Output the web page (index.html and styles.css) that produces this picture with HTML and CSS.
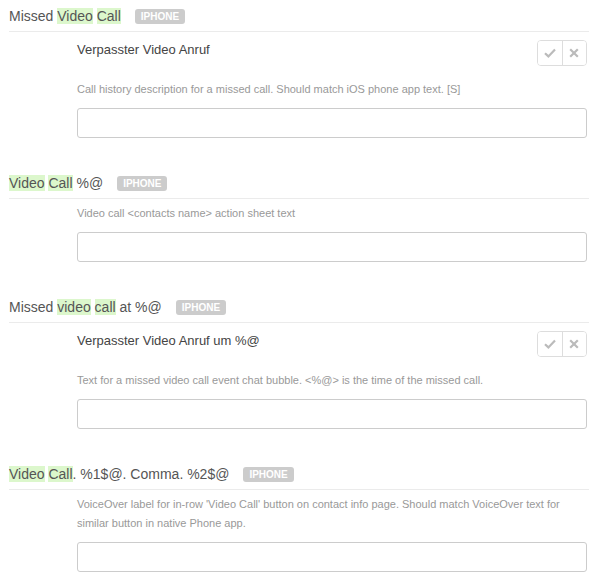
FILE: index.html
```html
<!DOCTYPE html>
<html lang="en">

<head>
    <meta charset="UTF-8">
    <meta name="viewport" content="width=device-width, initial-scale=1.0">
    <title>Translations</title>
    <link rel="stylesheet" href="styles.css">
</head>

<body>
    <div class="list">

        <div class="entry">
            <div class="entry-head">
                <span class="source">Missed <mark>Video</mark> <mark>Call</mark></span>
                <span class="badge">iPhone</span>
            </div>
            <div class="entry-body">
                <div class="suggestion">
                    <span class="suggestion-text">Verpasster Video Anruf</span>
                    <div class="actions">
                        <button class="act" title="Accept">
                            <svg width="12" height="10" viewBox="0 0 12 10"><path d="M1 5.2 L4.4 8.4 L11 1.6" fill="none" stroke="#bbb" stroke-width="2.2"/></svg>
                        </button>
                        <button class="act" title="Reject">
                            <svg width="10" height="10" viewBox="0 0 10 10"><path d="M1.2 1.2 L8.8 8.8 M8.8 1.2 L1.2 8.8" fill="none" stroke="#bbb" stroke-width="2.2"/></svg>
                        </button>
                    </div>
                </div>
                <p class="desc">Call history description for a missed call. Should match iOS phone app text. [S]</p>
                <input type="text" class="field">
            </div>
        </div>

        <div class="entry">
            <div class="entry-head">
                <span class="source"><mark>Video</mark> <mark>Call</mark> %@</span>
                <span class="badge">iPhone</span>
            </div>
            <div class="entry-body">
                <p class="desc first">Video call &lt;contacts name&gt; action sheet text</p>
                <input type="text" class="field">
            </div>
        </div>

        <div class="entry">
            <div class="entry-head">
                <span class="source">Missed <mark>video</mark> <mark>call</mark> at %@</span>
                <span class="badge">iPhone</span>
            </div>
            <div class="entry-body">
                <div class="suggestion">
                    <span class="suggestion-text">Verpasster Video Anruf um %@</span>
                    <div class="actions">
                        <button class="act" title="Accept">
                            <svg width="12" height="10" viewBox="0 0 12 10"><path d="M1 5.2 L4.4 8.4 L11 1.6" fill="none" stroke="#bbb" stroke-width="2.2"/></svg>
                        </button>
                        <button class="act" title="Reject">
                            <svg width="10" height="10" viewBox="0 0 10 10"><path d="M1.2 1.2 L8.8 8.8 M8.8 1.2 L1.2 8.8" fill="none" stroke="#bbb" stroke-width="2.2"/></svg>
                        </button>
                    </div>
                </div>
                <p class="desc">Text for a missed video call event chat bubble. &lt;%@&gt; is the time of the missed call.</p>
                <input type="text" class="field">
            </div>
        </div>

        <div class="entry">
            <div class="entry-head">
                <span class="source"><mark>Video</mark> <mark>Call</mark>. %1$@. Comma. %2$@</span>
                <span class="badge">iPhone</span>
            </div>
            <div class="entry-body">
                <p class="desc first">VoiceOver label for in-row 'Video Call' button on contact info page. Should match VoiceOver text for similar button in native Phone app.</p>
                <input type="text" class="field">
            </div>
        </div>

    </div>
</body>

</html>
```

FILE: styles.css
```css
*{
    padding: 0;
    margin: 0;
    box-sizing: border-box;
}
body {
    font-family: "Liberation Sans", Arial, sans-serif;
    background-color: #fff;
    color: #555;
}

.list {
    padding: 1px 9px 0 9px;
    width: 598px;
}

.entry {
    margin-bottom: 30px;
}

.entry-head {
    display: flex;
    align-items: center;
    height: 31px;
    border-bottom: 1px solid #ebebeb;
}

.source {
    font-size: 14px;
    color: #555;
}

.source mark {
    background-color: #dcf7cc;
    color: #555;
}

.badge {
    margin-left: 14px;
    padding: 0 6px;
    height: 15px;
    line-height: 15px;
    border-radius: 3px;
    background-color: #ccc;
    color: #fff;
    font-size: 10px;
    font-weight: bold;
    text-transform: uppercase;
}

.entry-body {
    padding-left: 68px;
    padding-right: 2px;
}

.suggestion {
    display: flex;
    justify-content: space-between;
    align-items: flex-start;
    padding-top: 8px;
    height: 34px;
}

.suggestion-text {
    font-size: 13px;
    line-height: 20px;
    color: #444;
}

.actions {
    display: flex;
    width: 50px;
    height: 26px;
    border: 1px solid #ddd;
    border-radius: 4px;
    overflow: hidden;
}

.act {
    flex: 1;
    display: flex;
    align-items: center;
    justify-content: center;
    background-color: #fff;
    border: none;
    cursor: pointer;
}

.act + .act {
    border-left: 1px solid #ddd;
}

.desc {
    margin-top: 14px;
    font-size: 11px;
    line-height: 19px;
    color: #999;
}

.desc.first {
    margin-top: 5px;
}

.field {
    display: block;
    margin-top: 9px;
    width: 100%;
    height: 30px;
    border: 1px solid #ccc;
    border-radius: 3px;
    background-color: #fff;
}
```
